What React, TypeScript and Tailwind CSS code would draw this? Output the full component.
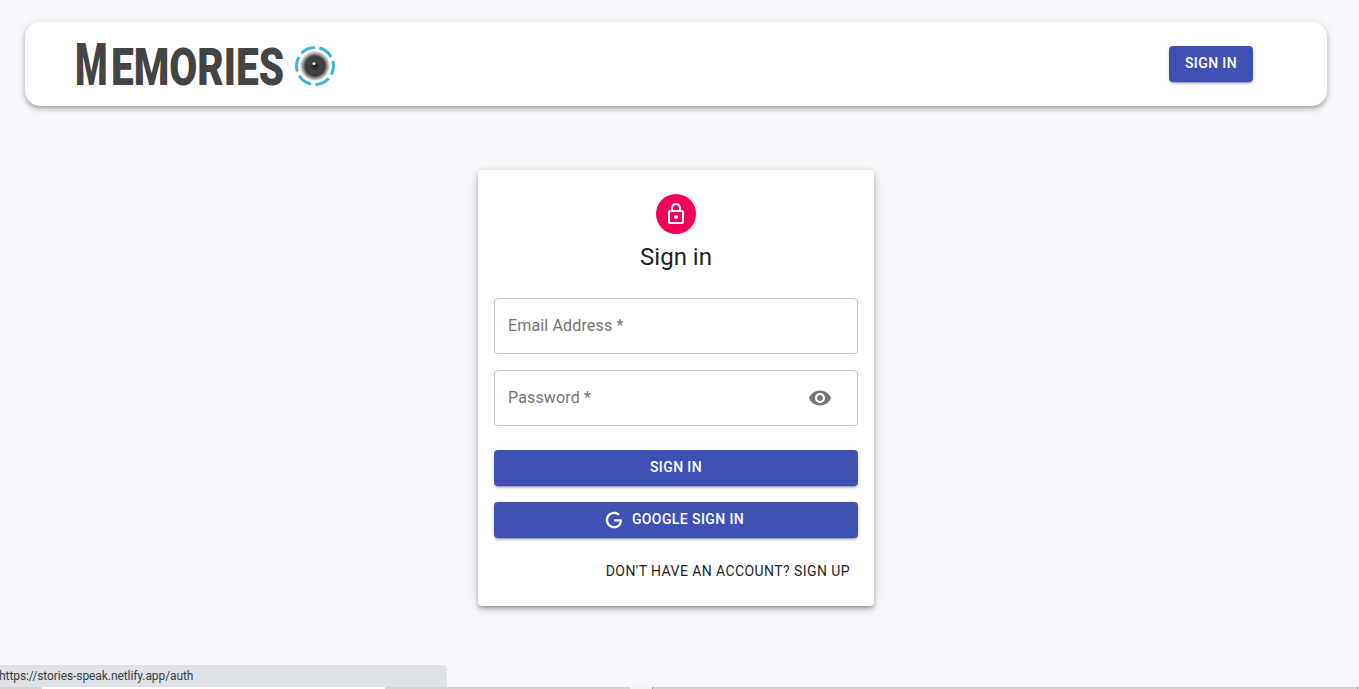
import { useState } from 'react'

const LOCK =
  'M18 8h-1V6c0-2.76-2.24-5-5-5S7 3.24 7 6v2H6c-1.1 0-2 .9-2 2v10c0 1.1.9 2 2 2h12c1.1 0 2-.9 2-2V10c0-1.1-.9-2-2-2zM9 6c0-1.66 1.34-3 3-3s3 1.34 3 3v2H9V6zm9 14H6V10h12v10zm-6-3c1.1 0 2-.9 2-2s-.9-2-2-2-2 .9-2 2 .9 2 2 2z'
const EYE =
  'M12 4.5C7 4.5 2.73 7.61 1 12c1.73 4.39 6 7.5 11 7.5s9.27-3.11 11-7.5c-1.73-4.39-6-7.5-11-7.5zM12 17c-2.76 0-5-2.24-5-5s2.24-5 5-5 5 2.24 5 5-2.24 5-5 5zm0-8c-1.66 0-3 1.34-3 3s1.34 3 3 3 3-1.34 3-3-1.34-3-3-3z'
const GOOGLE =
  'M21.35,11.1H12.18V13.83H18.69C18.36,17.64 15.19,19.27 12.19,19.27C8.36,19.27 5,16.25 5,12C5,7.9 8.2,4.73 12.2,4.73C15.29,4.73 17.1,6.7 17.1,6.7L19,4.72C19,4.72 16.56,2 12.1,2C6.42,2 2.03,6.8 2.03,12C2.03,17.05 6.16,22 12.25,22C17.6,22 21.5,18.33 21.5,12.91C21.5,11.76 21.35,11.1 21.35,11.1V11.1Z'

const buttonShadow =
  'shadow-[0_3px_1px_-2px_rgba(0,0,0,0.2),0_2px_2px_0_rgba(0,0,0,0.14),0_1px_5px_0_rgba(0,0,0,0.12)]'

function Lens() {
  return (
    <svg width="42" height="42" viewBox="0 0 42 42" className="block shrink-0">
      <defs>
        <radialGradient id="lens">
          <stop offset="0%" stopColor="#222222" />
          <stop offset="35%" stopColor="#444444" />
          <stop offset="65%" stopColor="#3c3c3c" />
          <stop offset="82%" stopColor="#999999" />
          <stop offset="100%" stopColor="#f4f4f4" />
        </radialGradient>
      </defs>
      <circle cx="21" cy="21" r="15" fill="url(#lens)" />
      <circle cx="20" cy="18.5" r="1.6" fill="#e0e0e0" />
      <circle
        cx="21"
        cy="21"
        r="18.5"
        fill="none"
        stroke="#3eb1dd"
        strokeWidth="3"
        strokeDasharray="15 4.4"
        strokeDashoffset="6"
      />
    </svg>
  )
}

function Field({ label, children }: { label: string; children?: React.ReactNode }) {
  return (
    <div className="flex h-14 items-center justify-between rounded border border-[#c4c4c4] pl-[13px] pr-[25px] text-base tracking-[0.15px] text-[#757575]">
      <span>{label}</span>
      {children}
    </div>
  )
}

export default function App() {
  const [showPassword, setShowPassword] = useState(false)

  return (
    <div className="relative h-[689px] overflow-hidden bg-[#f7f8fc] pr-[7px] font-['Roboto',sans-serif]">
      <div className="px-[25px] pt-[22px]">
        <header className="flex h-[84px] items-center rounded-[15px] bg-white pl-[50px] pr-[74px] shadow-[0_2px_4px_-1px_rgba(0,0,0,0.2),0_4px_5px_0_rgba(0,0,0,0.14),0_1px_10px_0_rgba(0,0,0,0.12)]">
          <div className="mb-[15px] flex h-[44px] w-[210px] items-baseline font-black leading-none text-[#444444]">
            <span className="origin-left scale-x-[0.62] text-[60px]">M</span>
            <span className="-ml-[17px] origin-left scale-x-[0.78] text-[52px]">EMORIES</span>
          </div>
          <div className="mr-auto ml-[9px] mt-[4px]">
            <Lens />
          </div>
          <button className={`h-9 w-[84px] rounded bg-[#3f51b5] pb-[2px] text-sm font-medium tracking-[0.4px] text-white ${buttonShadow}`}>
            SIGN IN
          </button>
        </header>
      </div>

      <main className="mt-16 flex justify-center">
        <div className="w-[396px] rounded bg-white p-4 shadow-[0_3px_3px_-2px_rgba(0,0,0,0.2),0_3px_4px_0_rgba(0,0,0,0.14),0_1px_8px_0_rgba(0,0,0,0.12),0_4px_10px_0_rgba(0,0,0,0.12)]">
          <div className="flex flex-col items-center">
            <div className="mt-2 flex h-10 w-10 items-center justify-center rounded-full bg-[#f50057]">
              <svg width="24" height="24" viewBox="0 0 24 24" fill="white">
                <path d={LOCK} />
              </svg>
            </div>
            <h1 className="mt-[7px] mb-px text-2xl leading-8 text-[#1f1f1f]">Sign in</h1>
          </div>

          <form className="mt-6 flex flex-col" onSubmit={(e) => e.preventDefault()}>
            <div className="flex flex-col gap-4">
              <Field label="Email Address *" />
              <Field label="Password *">
                <button type="button" onClick={() => setShowPassword(!showPassword)}>
                  <svg width="24" height="24" viewBox="0 0 24 24" fill="#757575" className="block">
                    <path d={EYE} />
                  </svg>
                </button>
              </Field>
            </div>
            <button className={`mt-6 h-9 rounded bg-[#3f51b5] pb-[2px] text-sm font-medium tracking-[0.4px] text-white ${buttonShadow}`}>
              SIGN IN
            </button>
            <button
              type="button"
              className={`mt-4 flex h-9 items-center justify-center gap-2 rounded bg-[#3f51b5] pb-[2px] pr-1 text-sm font-medium tracking-[0.4px] text-white ${buttonShadow}`}
            >
              <svg width="20" height="20" viewBox="0 0 24 24" fill="white" className="mt-[2px]">
                <path d={GOOGLE} />
              </svg>
              GOOGLE SIGN IN
            </button>
            <div className="mt-[15px] flex justify-end">
              <button type="button" className="h-[37px] px-2 pb-[2px] text-sm tracking-[0.42px] text-[#1f1f1f]">
                DON'T HAVE AN ACCOUNT? SIGN UP
              </button>
            </div>
          </form>
        </div>
      </main>

      {/* browser status bubble and the window edge under it */}
      <div className="absolute bottom-[2px] left-0 flex h-[22px] w-[447px] items-center overflow-hidden rounded-tr bg-[#dee1e6] text-xs tracking-[-0.08px] text-[#3c4043]">
        <span className="-ml-px">https://stories-speak.netlify.app/auth</span>
      </div>
      <div className="absolute bottom-0 left-0 flex h-[2px] w-full bg-[#d4d4d4]">
        <div className="ml-[42px] w-[343px] bg-white" />
        <div className="ml-[245px] w-[22px] bg-[#f2f2f2]" />
        <div className="w-px bg-[#999999]" />
        <div className="ml-auto mr-px w-px bg-[#999999]" />
      </div>
    </div>
  )
}
